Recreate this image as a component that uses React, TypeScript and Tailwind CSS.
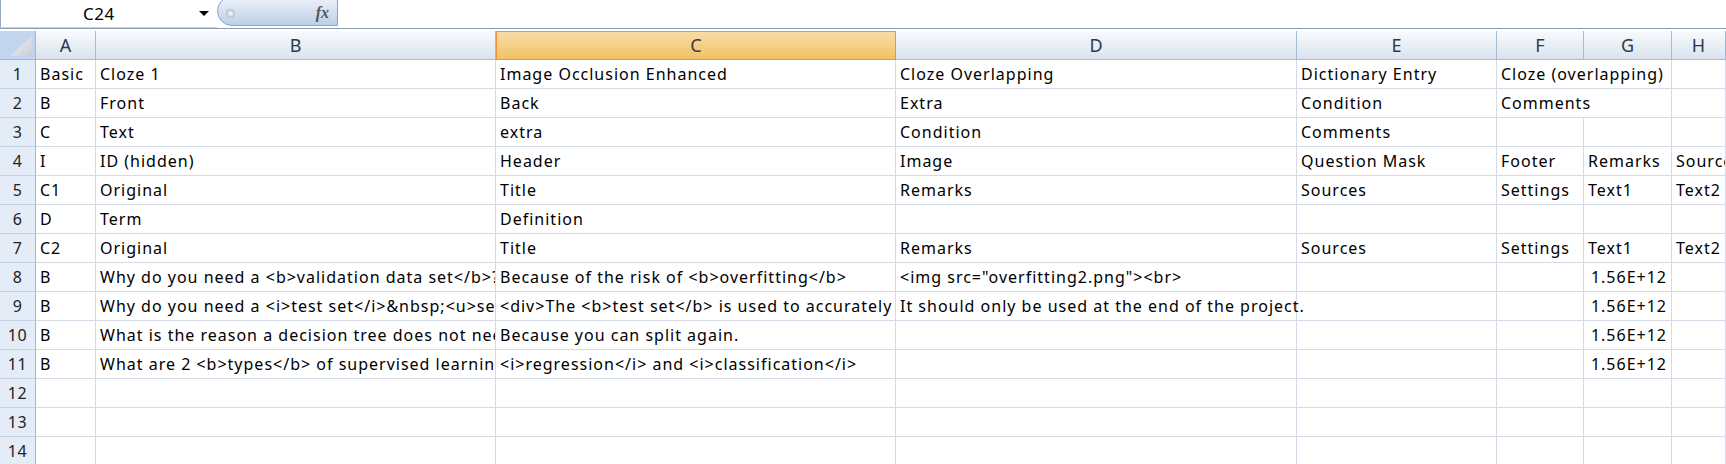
import React from "react";

type CellDef = { text?: string; right?: boolean; span?: number; spill?: boolean };

const COLS = ["A", "B", "C", "D", "E", "F", "G", "H"];

const rows: CellDef[][] = [
  [
    { text: "Basic" },
    { text: "Cloze 1" },
    { text: "Image Occlusion Enhanced" },
    { text: "Cloze Overlapping" },
    { text: "Dictionary Entry" },
    { text: "Cloze (overlapping)", span: 2 },
    {},
  ],
  [
    { text: "B" },
    { text: "Front" },
    { text: "Back" },
    { text: "Extra" },
    { text: "Condition" },
    { text: "Comments", span: 2 },
    {},
  ],
  [{ text: "C" }, { text: "Text" }, { text: "extra" }, { text: "Condition" }, { text: "Comments" }, {}, {}, {}],
  [
    { text: "I" },
    { text: "ID (hidden)" },
    { text: "Header" },
    { text: "Image" },
    { text: "Question Mask" },
    { text: "Footer" },
    { text: "Remarks" },
    { text: "Sources" },
  ],
  [
    { text: "C1" },
    { text: "Original" },
    { text: "Title" },
    { text: "Remarks" },
    { text: "Sources" },
    { text: "Settings" },
    { text: "Text1" },
    { text: "Text2" },
  ],
  [{ text: "D" }, { text: "Term" }, { text: "Definition" }, {}, {}, {}, {}, {}],
  [
    { text: "C2" },
    { text: "Original" },
    { text: "Title" },
    { text: "Remarks" },
    { text: "Sources" },
    { text: "Settings" },
    { text: "Text1" },
    { text: "Text2" },
  ],
  [
    { text: "B" },
    { text: "Why do you need a <b>validation data set</b>?" },
    { text: "Because of the risk of <b>overfitting</b>" },
    { text: '<img src="overfitting2.png"><br>' },
    {},
    {},
    { text: "1.56E+12", right: true },
    {},
  ],
  [
    { text: "B" },
    { text: "Why do you need a <i>test set</i>&nbsp;<u>separately</u>?" },
    { text: "<div>The <b>test set</b> is used to accurately estimate performance</div>" },
    { text: "It should only be used at the end of the project.", spill: true },
    {},
    {},
    { text: "1.56E+12", right: true },
    {},
  ],
  [
    { text: "B" },
    { text: "What is the reason a decision tree does not need feature scaling?" },
    { text: "Because you can split again." },
    {},
    {},
    {},
    { text: "1.56E+12", right: true },
    {},
  ],
  [
    { text: "B" },
    { text: "What are 2 <b>types</b> of supervised learning?" },
    { text: "<i>regression</i> and <i>classification</i>" },
    {},
    {},
    {},
    { text: "1.56E+12", right: true },
    {},
  ],
  [{}, {}, {}, {}, {}, {}, {}, {}],
  [{}, {}, {}, {}, {}, {}, {}, {}],
  [{}, {}, {}, {}, {}, {}, {}, {}],
];

const font = { fontFamily: '"Noto Sans", "Noto Sans CJK KR", sans-serif' };

function FormulaBar() {
  return (
    <div className="flex h-[29px] border-b border-[#8b9db5] bg-white">
      <div className="flex h-[28px] w-[217px] items-center border-l border-[#9aa9bc] border-b border-b-[#c9d3e0]">
        <span className="ml-[82px] text-[17px] tracking-[0.5px] text-black">C24</span>
        <span className="ml-auto mr-[8px] h-0 w-0 border-x-[5px] border-t-[5px] border-x-transparent border-t-black" />
      </div>
      <div className="relative h-[27px] w-[121px] overflow-hidden">
        <div className="absolute -top-[4px] left-0 flex h-[30px] w-[121px] items-center rounded-l-[15px] border border-[#8aa3c2] bg-linear-to-b from-[#eef3fa] to-[#bccfe8]">
          <span className="ml-[8px] mt-[4px] h-[9px] w-[9px] rounded-full bg-radial from-white to-[#9aa3ad]" />
          <span
            className="ml-auto mr-[8px] mt-[4px] text-[16px] font-bold italic text-[#555]"
            style={{ fontFamily: '"Liberation Serif", serif' }}
          >
            fx
          </span>
        </div>
      </div>
      <div className="flex-1" />
    </div>
  );
}

export default function App() {
  return (
    <div className="h-[464px] w-[1726px] overflow-hidden bg-white" style={font}>
      <FormulaBar />
      <div className="h-[2px]" />
      <div className="grid grid-cols-[36px_60px_400px_400px_401px_200px_87px_88px_1fr]">
        <div className="relative h-[29px] border-r border-b border-[#9eb6ce] bg-[#c3d5ee]">
          <svg className="absolute right-[3px] bottom-[3px]" width="22" height="20" viewBox="0 0 22 20">
            <defs>
              <linearGradient id="tri" x1="0" y1="0" x2="1" y2="1">
                <stop offset="0" stopColor="#f4f7fb" />
                <stop offset="1" stopColor="#c7ccd3" />
              </linearGradient>
            </defs>
            <polygon points="22,0 22,20 0,20" fill="url(#tri)" />
          </svg>
        </div>
        {COLS.map(c => (
          <div
            key={c}
            className={
              c === "C"
                ? "flex h-[29px] items-center justify-center border border-[#f29536] bg-linear-to-b from-[#f8dca6] to-[#f1c262] text-[18px] text-[#3b3b3b]"
                : "flex h-[29px] items-center justify-center border-r border-b border-[#a7bbd2] bg-linear-to-b from-[#f8fafd] to-[#dae3ee] text-[18px] text-[#2b3a4a]"
            }
          >
            {c}
          </div>
        ))}
        {rows.map((row, r) => (
          <React.Fragment key={r}>
            <div className="flex h-[29px] items-center justify-center border-r border-b border-r-[#9eb6ce] border-b-[#c5d3e4] bg-[#e4ecf7] text-[16px] tracking-[0.5px] text-[#222]">
              {r + 1}
            </div>
            {row.map((cell, i) => (
              <div
                key={i}
                className={
                  (cell.span === 2 ? "col-span-2 " : "") +
                  (cell.spill ? "relative z-10 overflow-visible " : "overflow-hidden ") +
                  "flex h-[29px] items-center whitespace-nowrap border-r border-b border-[#d4dbe7] text-[16px] tracking-[1px] text-black " +
                  (cell.right ? "justify-end pr-[4px]" : "pl-[4px]")
                }
              >
                {cell.text}
              </div>
            ))}
          </React.Fragment>
        ))}
      </div>
    </div>
  );
}
